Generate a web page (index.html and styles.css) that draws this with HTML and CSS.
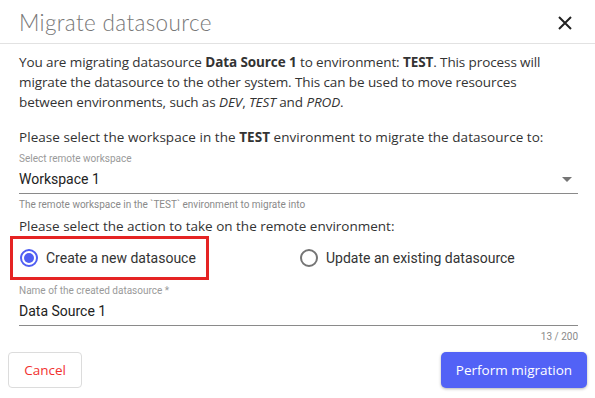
FILE: index.html
```html
<!DOCTYPE html>
<html>
<head>
<meta charset="utf-8">
<link rel="stylesheet" href="styles.css">
</head>
<body>
<div class="dialog">
  <div class="header">
    <h1 class="title">Migrate datasource</h1>
    <svg class="close" width="14" height="14" viewBox="0 0 14 14"><path d="M1 1 L13 13 M13 1 L1 13" stroke="#222" stroke-width="2" fill="none"/></svg>
  </div>
  <div class="content">
    <p class="text intro">You are migrating datasource <b>Data Source 1</b> to environment: <b>TEST</b>. This process will migrate the datasource to the other system. This can be used to move resources between environments, such as <i>DEV</i>, <i>TEST</i> and <i>PROD</i>.</p>
    <p class="text prompt">Please select the workspace in the <b>TEST</b> environment to migrate the datasource to:</p>
    <div class="field">
      <div class="label">Select remote workspace</div>
      <div class="input select"><span>Workspace 1</span><svg width="10" height="5" viewBox="0 0 10 5"><path d="M0 0 L10 0 L5 5 Z" fill="#757575"/></svg></div>
      <div class="helper">The remote workspace in the `TEST` environment to migrate into</div>
    </div>
    <p class="text prompt2">Please select the action to take on the remote environment:</p>
    <div class="radios">
      <div class="radio-opt highlight"><span class="radio checked"></span><span>Create a new datasouce</span></div>
      <div class="radio-opt"><span class="radio"></span><span>Update an existing datasource</span></div>
    </div>
    <div class="field field2">
      <div class="label">Name of the created datasource *</div>
      <div class="input"><span>Data Source 1</span></div>
      <div class="counter">13 / 200</div>
    </div>
  </div>
  <div class="footer">
    <button class="btn cancel">Cancel</button>
    <button class="btn primary">Perform migration</button>
  </div>
</div>
</body>
</html>
```

FILE: styles.css
```css
* { box-sizing: border-box; }
html, body { margin: 0; padding: 0; background: #fff; }
body { width: 595px; height: 398px; overflow: hidden; font-family: "Open Sans", sans-serif; color: #333; }
.dialog { display: flex; flex-direction: column; height: 398px; }
.header { height: 44px; border-bottom: 1px solid #e2e2e2; display: flex; align-items: center; justify-content: space-between; padding: 2px 23px 0 19px; }
.title { margin: 0; font-family: "Lato", sans-serif; font-weight: 300; font-size: 22.5px; color: #777; letter-spacing: 0.35px; }
.close { display: block; }
.content { padding: 0 17px 0 19px; }
.text { margin: 0; font-size: 13.5px; line-height: 20px; color: #333; }
.text b { font-weight: 700; }
.intro { margin-top: 8px; letter-spacing: -0.1px; max-width: 528px; }
.prompt { margin-top: 15px; letter-spacing: 0.05px; }
.field { margin-top: 6px; font-family: "Roboto", sans-serif; }
.label { font-size: 10px; line-height: 12px; color: #9a9a9a; }
.input { display: flex; align-items: center; justify-content: space-between; height: 29px; border-bottom: 1px solid #8a8a8a; font-size: 14px; color: #222; padding-right: 6px; }
.helper { font-size: 10px; line-height: 12px; margin-top: 5px; color: #8a8a8a; }
.prompt2 { margin-top: 5px; }
.radios { display: flex; margin-top: 0; margin-left: -9px; }
.radio-opt { display: flex; align-items: center; gap: 8px; height: 44px; padding: 0 9px 0 10px; font-family: "Roboto", sans-serif; font-size: 14px; color: #333; }
.radio-opt.highlight { width: 199px; border: 3px solid #e52323; padding-left: 7px; margin-right: 81px; }
.radio { width: 18px; height: 18px; border: 2px solid #757575; border-radius: 50%; display: inline-flex; align-items: center; justify-content: center; }
.radio.checked { border-color: #4f5ef2; }
.radio.checked::after { content: ""; width: 10px; height: 10px; border-radius: 50%; background: #4f5ef2; }
.field2 { margin-top: 5px; }
.counter { font-size: 10px; line-height: 12px; text-align: right; color: #8a8a8a; margin-top: 5px; }
.footer { display: flex; justify-content: space-between; padding: 0 8px; margin-top: 9px; }
.btn { height: 36px; font-family: "Open Sans", sans-serif; font-size: 13.5px; border-radius: 4px; cursor: pointer; }
.cancel { width: 74px; background: #fff; border: 1px solid #dcdcdc; color: #f2322f; }
.primary { width: 146px; background: #5262f6; border: none; color: #fff; box-shadow: 0 1px 3px rgba(0,0,0,0.3); border-radius: 5px; }
```
